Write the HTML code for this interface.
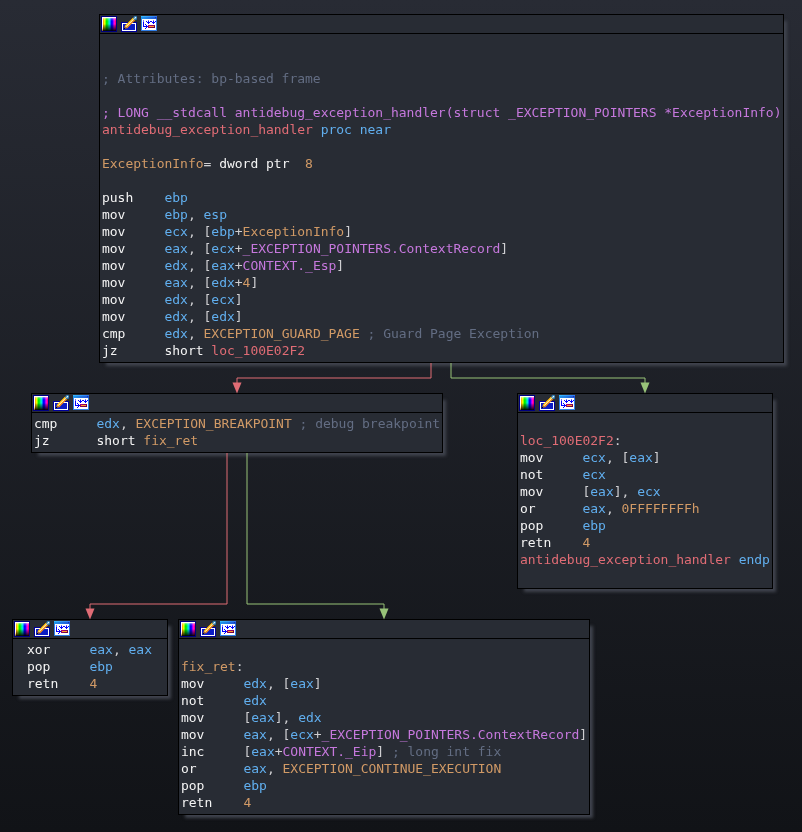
<!DOCTYPE html><html><head><meta charset="utf-8"><title>IDA graph</title><style>
html,body{margin:0;padding:0}
html{width:802px;height:832px;background:#111317}
body{width:802px;height:832px;overflow:hidden;background:linear-gradient(#282b34,#111317);position:relative;
 font-family:"DejaVu Sans Mono","Liberation Mono",monospace;font-size:13px}
.box{position:absolute;box-sizing:border-box;background:#282c34;border:1px solid #000;
 box-shadow:5px 5px 3px -2.3px #40444e}
.tb{position:absolute;left:0;right:0;top:18px;height:1px;background:#000}
.ic{position:absolute;left:1px;top:1px;height:16px}
.ic svg{position:absolute;top:0}
.code{position:absolute;color:#f4f4f4;will-change:transform;letter-spacing:-0.017px;margin-left:-0.1px}
.l{height:17px;line-height:17px;white-space:pre}
.m{color:#f4f4f4}.p{color:#cfcfd2}.r{color:#61afef}.c{color:#636d83}.f{color:#c678dd}.n{color:#e06c75}.o{color:#d19a66}
svg.e{position:absolute;left:0;top:0;z-index:5;will-change:transform}
</style></head><body><svg class="e" width="802" height="832" viewBox="0 0 802 832"><path d="M431 363 L431 378 L237 378 L237 384" fill="none" stroke="#e06c75" stroke-width="1"/><polygon points="232.5,382.5 241.5,382.5 237,393.5" fill="#e06c75"/><path d="M451 363 L451 378 L645 378 L645 384" fill="none" stroke="#98c379" stroke-width="1"/><polygon points="640.5,382.5 649.5,382.5 645,393.5" fill="#98c379"/><path d="M227 453 L227 604 L90 604 L90 610" fill="none" stroke="#e06c75" stroke-width="1"/><polygon points="85.5,608.5 94.5,608.5 90,619.5" fill="#e06c75"/><path d="M247 453 L247 604 L384 604 L384 610" fill="none" stroke="#98c379" stroke-width="1"/><polygon points="379.5,608.5 388.5,608.5 384,619.5" fill="#98c379"/></svg><div class="box" style="left:99px;top:14px;width:685px;height:349px"><div class="tb"></div><div class="ic"><svg width="16" height="16" viewBox="0 0 16 16" style="left:0"><defs><linearGradient id="g1h" x1="0" x2="1" y1="0" y2="0"><stop offset="0.036" stop-color="#fff"/><stop offset=".107" stop-color="#ffb000"/><stop offset=".18" stop-color="#f0ff00"/><stop offset=".25" stop-color="#80ff00"/><stop offset=".32" stop-color="#00f000"/><stop offset=".39" stop-color="#00f020"/><stop offset=".46" stop-color="#00f090"/><stop offset=".54" stop-color="#00e0e8"/><stop offset=".61" stop-color="#0070ff"/><stop offset=".68" stop-color="#0000ff"/><stop offset=".75" stop-color="#2000ff"/><stop offset=".82" stop-color="#a000ff"/><stop offset=".89" stop-color="#ff00e0"/><stop offset=".96" stop-color="#ff0080"/></linearGradient><linearGradient id="g1v" x1="0" x2="0" y1="0" y2="1"><stop offset="0.036" stop-color="#fff" stop-opacity="1"/><stop offset=".107" stop-color="#fff" stop-opacity=".45"/><stop offset=".18" stop-color="#fff" stop-opacity=".18"/><stop offset=".25" stop-color="#fff" stop-opacity=".06"/><stop offset=".32" stop-color="#fff" stop-opacity="0"/><stop offset=".5" stop-color="#000" stop-opacity="0"/><stop offset=".61" stop-color="#000" stop-opacity=".25"/><stop offset=".75" stop-color="#000" stop-opacity=".5"/><stop offset=".89" stop-color="#000" stop-opacity=".75"/><stop offset=".96" stop-color="#000" stop-opacity=".92"/></linearGradient><linearGradient id="g1w" x1="0" x2="0" y1="0" y2="1"><stop offset="0" stop-color="#fff"/><stop offset=".7" stop-color="#fff"/><stop offset=".85" stop-color="#ffd890"/><stop offset="1" stop-color="#705010"/></linearGradient></defs><rect x="0" y="0" width="16" height="16" fill="#00007f"/><rect x="1" y="1" width="14" height="14" fill="url(#g1h)"/><rect x="2" y="1" width="13" height="14" fill="url(#g1v)"/><rect x="1" y="1" width="1" height="14" fill="url(#g1w)"/></svg><svg width="16" height="16" viewBox="0 0 16 16" style="left:20px"><rect x="0" y="6" width="16" height="10" fill="#00009a"/><rect x="1" y="7" width="14" height="8" fill="#fff"/><rect x="2" y="8" width="12" height="6" fill="#0c1cc4"/><path d="M4.8 11.2L13.4 2.6" stroke="#f08a1c" stroke-width="3.4" fill="none"/><path d="M4.3 10.7L12.7 2.3" stroke="#ffc800" stroke-width="1.6" fill="none"/><path d="M5.1 10.7L13.1 2.7" stroke="#fff6d8" stroke-width="1" fill="none"/><path d="M2.9 13.1L3.5 10.4L5.6 12.4Z" fill="#d88838"/><path d="M2.7 13.3L3.3 11.6L4.6 12.8Z" fill="#000"/><circle cx="14.3" cy="1.9" r="2" fill="#2a7db4"/><path d="M13.5 2.7L15 1.2" stroke="#fff" stroke-width="1.1" fill="none"/></svg><svg width="16" height="16" viewBox="0 0 16 16" style="left:40px" shape-rendering="crispEdges"><defs><linearGradient id="g1t" x1="0" x2="1" y1="0" y2="0"><stop offset="0" stop-color="#38bcf8"/><stop offset="1" stop-color="#3074f0"/></linearGradient><linearGradient id="g1u" x1="0" x2="1" y1="0" y2="0"><stop offset="0" stop-color="#2098ec"/><stop offset="1" stop-color="#2050d4"/></linearGradient><linearGradient id="g1m" x1="0" x2="1" y1="0" y2="1"><stop offset="0" stop-color="#b00088"/><stop offset="1" stop-color="#600030"/></linearGradient></defs><rect x="0" y="0" width="16" height="15" fill="#2f7ee8"/><rect x="0" y="0" width="16" height="1" fill="url(#g1t)"/><rect x="0" y="1" width="16" height="2" fill="url(#g1u)"/><rect x="14" y="1" width="1" height="1" fill="#1838a8"/><rect x="1" y="3" width="14" height="11" fill="#fff"/><g fill="#0000ff"><rect x="2" y="4" width="1" height="7"/><rect x="2" y="10" width="5" height="1"/><rect x="4" y="8" width="1" height="1"/><rect x="5" y="9" width="1" height="1"/><rect x="5" y="11" width="1" height="1"/><rect x="4" y="12" width="1" height="1"/><rect x="5" y="5" width="1" height="1"/><rect x="7" y="4" width="1" height="4"/><rect x="6" y="6" width="3" height="1"/><rect x="9" y="5" width="2" height="1"/><rect x="12" y="4" width="1" height="4"/><rect x="11" y="6" width="3" height="1"/><rect x="14" y="5" width="1" height="1"/></g><g fill="#fff" fill-opacity=".45"><rect x="2" y="4" width="1" height="2"/><rect x="7" y="4" width="1" height="1"/><rect x="12" y="4" width="1" height="1"/></g><rect x="7" y="9" width="7" height="3" fill="url(#g1m)"/><rect x="8" y="10" width="5" height="1" fill="#ffa028"/></svg></div><div class="code" style="left:2px;top:21px"><div class="l"></div><div class="l"></div><div class="l"><span class="c">; Attributes: bp-based frame</span></div><div class="l"></div><div class="l"><span class="f">; LONG __stdcall antidebug_exception_handler(struct _EXCEPTION_POINTERS *ExceptionInfo)</span></div><div class="l"><span class="n">antidebug_exception_handler</span><span class="r"> proc near</span></div><div class="l"></div><div class="l"><span class="o">ExceptionInfo</span><span class="p">=</span><span class="m"> dword ptr  </span><span class="o">8</span></div><div class="l"></div><div class="l"><span class="m">push    </span><span class="r">ebp</span></div><div class="l"><span class="m">mov     </span><span class="r">ebp</span><span class="p">, </span><span class="r">esp</span></div><div class="l"><span class="m">mov     </span><span class="r">ecx</span><span class="p">, [</span><span class="r">ebp</span><span class="p">+</span><span class="o">ExceptionInfo</span><span class="p">]</span></div><div class="l"><span class="m">mov     </span><span class="r">eax</span><span class="p">, [</span><span class="r">ecx</span><span class="p">+</span><span class="f">_EXCEPTION_POINTERS.ContextRecord</span><span class="p">]</span></div><div class="l"><span class="m">mov     </span><span class="r">edx</span><span class="p">, [</span><span class="r">eax</span><span class="p">+</span><span class="f">CONTEXT._Esp</span><span class="p">]</span></div><div class="l"><span class="m">mov     </span><span class="r">eax</span><span class="p">, [</span><span class="r">edx</span><span class="p">+</span><span class="o">4</span><span class="p">]</span></div><div class="l"><span class="m">mov     </span><span class="r">edx</span><span class="p">, [</span><span class="r">ecx</span><span class="p">]</span></div><div class="l"><span class="m">mov     </span><span class="r">edx</span><span class="p">, [</span><span class="r">edx</span><span class="p">]</span></div><div class="l"><span class="m">cmp     </span><span class="r">edx</span><span class="p">, </span><span class="o">EXCEPTION_GUARD_PAGE</span><span class="c"> ; Guard Page Exception</span></div><div class="l"><span class="m">jz      </span><span class="m">short </span><span class="n">loc_100E02F2</span></div></div></div><div class="box" style="left:31px;top:393px;width:412px;height:60px"><div class="tb"></div><div class="ic"><svg width="16" height="16" viewBox="0 0 16 16" style="left:0"><defs><linearGradient id="g2h" x1="0" x2="1" y1="0" y2="0"><stop offset="0.036" stop-color="#fff"/><stop offset=".107" stop-color="#ffb000"/><stop offset=".18" stop-color="#f0ff00"/><stop offset=".25" stop-color="#80ff00"/><stop offset=".32" stop-color="#00f000"/><stop offset=".39" stop-color="#00f020"/><stop offset=".46" stop-color="#00f090"/><stop offset=".54" stop-color="#00e0e8"/><stop offset=".61" stop-color="#0070ff"/><stop offset=".68" stop-color="#0000ff"/><stop offset=".75" stop-color="#2000ff"/><stop offset=".82" stop-color="#a000ff"/><stop offset=".89" stop-color="#ff00e0"/><stop offset=".96" stop-color="#ff0080"/></linearGradient><linearGradient id="g2v" x1="0" x2="0" y1="0" y2="1"><stop offset="0.036" stop-color="#fff" stop-opacity="1"/><stop offset=".107" stop-color="#fff" stop-opacity=".45"/><stop offset=".18" stop-color="#fff" stop-opacity=".18"/><stop offset=".25" stop-color="#fff" stop-opacity=".06"/><stop offset=".32" stop-color="#fff" stop-opacity="0"/><stop offset=".5" stop-color="#000" stop-opacity="0"/><stop offset=".61" stop-color="#000" stop-opacity=".25"/><stop offset=".75" stop-color="#000" stop-opacity=".5"/><stop offset=".89" stop-color="#000" stop-opacity=".75"/><stop offset=".96" stop-color="#000" stop-opacity=".92"/></linearGradient><linearGradient id="g2w" x1="0" x2="0" y1="0" y2="1"><stop offset="0" stop-color="#fff"/><stop offset=".7" stop-color="#fff"/><stop offset=".85" stop-color="#ffd890"/><stop offset="1" stop-color="#705010"/></linearGradient></defs><rect x="0" y="0" width="16" height="16" fill="#00007f"/><rect x="1" y="1" width="14" height="14" fill="url(#g2h)"/><rect x="2" y="1" width="13" height="14" fill="url(#g2v)"/><rect x="1" y="1" width="1" height="14" fill="url(#g2w)"/></svg><svg width="16" height="16" viewBox="0 0 16 16" style="left:20px"><rect x="0" y="6" width="16" height="10" fill="#00009a"/><rect x="1" y="7" width="14" height="8" fill="#fff"/><rect x="2" y="8" width="12" height="6" fill="#0c1cc4"/><path d="M4.8 11.2L13.4 2.6" stroke="#f08a1c" stroke-width="3.4" fill="none"/><path d="M4.3 10.7L12.7 2.3" stroke="#ffc800" stroke-width="1.6" fill="none"/><path d="M5.1 10.7L13.1 2.7" stroke="#fff6d8" stroke-width="1" fill="none"/><path d="M2.9 13.1L3.5 10.4L5.6 12.4Z" fill="#d88838"/><path d="M2.7 13.3L3.3 11.6L4.6 12.8Z" fill="#000"/><circle cx="14.3" cy="1.9" r="2" fill="#2a7db4"/><path d="M13.5 2.7L15 1.2" stroke="#fff" stroke-width="1.1" fill="none"/></svg><svg width="16" height="16" viewBox="0 0 16 16" style="left:40px" shape-rendering="crispEdges"><defs><linearGradient id="g2t" x1="0" x2="1" y1="0" y2="0"><stop offset="0" stop-color="#38bcf8"/><stop offset="1" stop-color="#3074f0"/></linearGradient><linearGradient id="g2u" x1="0" x2="1" y1="0" y2="0"><stop offset="0" stop-color="#2098ec"/><stop offset="1" stop-color="#2050d4"/></linearGradient><linearGradient id="g2m" x1="0" x2="1" y1="0" y2="1"><stop offset="0" stop-color="#b00088"/><stop offset="1" stop-color="#600030"/></linearGradient></defs><rect x="0" y="0" width="16" height="15" fill="#2f7ee8"/><rect x="0" y="0" width="16" height="1" fill="url(#g2t)"/><rect x="0" y="1" width="16" height="2" fill="url(#g2u)"/><rect x="14" y="1" width="1" height="1" fill="#1838a8"/><rect x="1" y="3" width="14" height="11" fill="#fff"/><g fill="#0000ff"><rect x="2" y="4" width="1" height="7"/><rect x="2" y="10" width="5" height="1"/><rect x="4" y="8" width="1" height="1"/><rect x="5" y="9" width="1" height="1"/><rect x="5" y="11" width="1" height="1"/><rect x="4" y="12" width="1" height="1"/><rect x="5" y="5" width="1" height="1"/><rect x="7" y="4" width="1" height="4"/><rect x="6" y="6" width="3" height="1"/><rect x="9" y="5" width="2" height="1"/><rect x="12" y="4" width="1" height="4"/><rect x="11" y="6" width="3" height="1"/><rect x="14" y="5" width="1" height="1"/></g><g fill="#fff" fill-opacity=".45"><rect x="2" y="4" width="1" height="2"/><rect x="7" y="4" width="1" height="1"/><rect x="12" y="4" width="1" height="1"/></g><rect x="7" y="9" width="7" height="3" fill="url(#g2m)"/><rect x="8" y="10" width="5" height="1" fill="#ffa028"/></svg></div><div class="code" style="left:2px;top:21px"><div class="l"><span class="m">cmp     </span><span class="r">edx</span><span class="p">, </span><span class="o">EXCEPTION_BREAKPOINT</span><span class="c"> ; debug breakpoint</span></div><div class="l"><span class="m">jz      </span><span class="m">short </span><span class="o">fix_ret</span></div></div></div><div class="box" style="left:517px;top:393px;width:256px;height:196px"><div class="tb"></div><div class="ic"><svg width="16" height="16" viewBox="0 0 16 16" style="left:0"><defs><linearGradient id="g3h" x1="0" x2="1" y1="0" y2="0"><stop offset="0.036" stop-color="#fff"/><stop offset=".107" stop-color="#ffb000"/><stop offset=".18" stop-color="#f0ff00"/><stop offset=".25" stop-color="#80ff00"/><stop offset=".32" stop-color="#00f000"/><stop offset=".39" stop-color="#00f020"/><stop offset=".46" stop-color="#00f090"/><stop offset=".54" stop-color="#00e0e8"/><stop offset=".61" stop-color="#0070ff"/><stop offset=".68" stop-color="#0000ff"/><stop offset=".75" stop-color="#2000ff"/><stop offset=".82" stop-color="#a000ff"/><stop offset=".89" stop-color="#ff00e0"/><stop offset=".96" stop-color="#ff0080"/></linearGradient><linearGradient id="g3v" x1="0" x2="0" y1="0" y2="1"><stop offset="0.036" stop-color="#fff" stop-opacity="1"/><stop offset=".107" stop-color="#fff" stop-opacity=".45"/><stop offset=".18" stop-color="#fff" stop-opacity=".18"/><stop offset=".25" stop-color="#fff" stop-opacity=".06"/><stop offset=".32" stop-color="#fff" stop-opacity="0"/><stop offset=".5" stop-color="#000" stop-opacity="0"/><stop offset=".61" stop-color="#000" stop-opacity=".25"/><stop offset=".75" stop-color="#000" stop-opacity=".5"/><stop offset=".89" stop-color="#000" stop-opacity=".75"/><stop offset=".96" stop-color="#000" stop-opacity=".92"/></linearGradient><linearGradient id="g3w" x1="0" x2="0" y1="0" y2="1"><stop offset="0" stop-color="#fff"/><stop offset=".7" stop-color="#fff"/><stop offset=".85" stop-color="#ffd890"/><stop offset="1" stop-color="#705010"/></linearGradient></defs><rect x="0" y="0" width="16" height="16" fill="#00007f"/><rect x="1" y="1" width="14" height="14" fill="url(#g3h)"/><rect x="2" y="1" width="13" height="14" fill="url(#g3v)"/><rect x="1" y="1" width="1" height="14" fill="url(#g3w)"/></svg><svg width="16" height="16" viewBox="0 0 16 16" style="left:20px"><rect x="0" y="6" width="16" height="10" fill="#00009a"/><rect x="1" y="7" width="14" height="8" fill="#fff"/><rect x="2" y="8" width="12" height="6" fill="#0c1cc4"/><path d="M4.8 11.2L13.4 2.6" stroke="#f08a1c" stroke-width="3.4" fill="none"/><path d="M4.3 10.7L12.7 2.3" stroke="#ffc800" stroke-width="1.6" fill="none"/><path d="M5.1 10.7L13.1 2.7" stroke="#fff6d8" stroke-width="1" fill="none"/><path d="M2.9 13.1L3.5 10.4L5.6 12.4Z" fill="#d88838"/><path d="M2.7 13.3L3.3 11.6L4.6 12.8Z" fill="#000"/><circle cx="14.3" cy="1.9" r="2" fill="#2a7db4"/><path d="M13.5 2.7L15 1.2" stroke="#fff" stroke-width="1.1" fill="none"/></svg><svg width="16" height="16" viewBox="0 0 16 16" style="left:40px" shape-rendering="crispEdges"><defs><linearGradient id="g3t" x1="0" x2="1" y1="0" y2="0"><stop offset="0" stop-color="#38bcf8"/><stop offset="1" stop-color="#3074f0"/></linearGradient><linearGradient id="g3u" x1="0" x2="1" y1="0" y2="0"><stop offset="0" stop-color="#2098ec"/><stop offset="1" stop-color="#2050d4"/></linearGradient><linearGradient id="g3m" x1="0" x2="1" y1="0" y2="1"><stop offset="0" stop-color="#b00088"/><stop offset="1" stop-color="#600030"/></linearGradient></defs><rect x="0" y="0" width="16" height="15" fill="#2f7ee8"/><rect x="0" y="0" width="16" height="1" fill="url(#g3t)"/><rect x="0" y="1" width="16" height="2" fill="url(#g3u)"/><rect x="14" y="1" width="1" height="1" fill="#1838a8"/><rect x="1" y="3" width="14" height="11" fill="#fff"/><g fill="#0000ff"><rect x="2" y="4" width="1" height="7"/><rect x="2" y="10" width="5" height="1"/><rect x="4" y="8" width="1" height="1"/><rect x="5" y="9" width="1" height="1"/><rect x="5" y="11" width="1" height="1"/><rect x="4" y="12" width="1" height="1"/><rect x="5" y="5" width="1" height="1"/><rect x="7" y="4" width="1" height="4"/><rect x="6" y="6" width="3" height="1"/><rect x="9" y="5" width="2" height="1"/><rect x="12" y="4" width="1" height="4"/><rect x="11" y="6" width="3" height="1"/><rect x="14" y="5" width="1" height="1"/></g><g fill="#fff" fill-opacity=".45"><rect x="2" y="4" width="1" height="2"/><rect x="7" y="4" width="1" height="1"/><rect x="12" y="4" width="1" height="1"/></g><rect x="7" y="9" width="7" height="3" fill="url(#g3m)"/><rect x="8" y="10" width="5" height="1" fill="#ffa028"/></svg></div><div class="code" style="left:2px;top:21px"><div class="l"></div><div class="l"><span class="n">loc_100E02F2</span><span class="p">:</span></div><div class="l"><span class="m">mov     </span><span class="r">ecx</span><span class="p">, [</span><span class="r">eax</span><span class="p">]</span></div><div class="l"><span class="m">not     </span><span class="r">ecx</span></div><div class="l"><span class="m">mov     </span><span class="p">[</span><span class="r">eax</span><span class="p">], </span><span class="r">ecx</span></div><div class="l"><span class="m">or      </span><span class="r">eax</span><span class="p">, </span><span class="o">0FFFFFFFFh</span></div><div class="l"><span class="m">pop     </span><span class="r">ebp</span></div><div class="l"><span class="m">retn    </span><span class="o">4</span></div><div class="l"><span class="n">antidebug_exception_handler</span><span class="r"> endp</span></div><div class="l"></div></div></div><div class="box" style="left:12px;top:619px;width:156px;height:77px"><div class="tb"></div><div class="ic"><svg width="16" height="16" viewBox="0 0 16 16" style="left:0"><defs><linearGradient id="g4h" x1="0" x2="1" y1="0" y2="0"><stop offset="0.036" stop-color="#fff"/><stop offset=".107" stop-color="#ffb000"/><stop offset=".18" stop-color="#f0ff00"/><stop offset=".25" stop-color="#80ff00"/><stop offset=".32" stop-color="#00f000"/><stop offset=".39" stop-color="#00f020"/><stop offset=".46" stop-color="#00f090"/><stop offset=".54" stop-color="#00e0e8"/><stop offset=".61" stop-color="#0070ff"/><stop offset=".68" stop-color="#0000ff"/><stop offset=".75" stop-color="#2000ff"/><stop offset=".82" stop-color="#a000ff"/><stop offset=".89" stop-color="#ff00e0"/><stop offset=".96" stop-color="#ff0080"/></linearGradient><linearGradient id="g4v" x1="0" x2="0" y1="0" y2="1"><stop offset="0.036" stop-color="#fff" stop-opacity="1"/><stop offset=".107" stop-color="#fff" stop-opacity=".45"/><stop offset=".18" stop-color="#fff" stop-opacity=".18"/><stop offset=".25" stop-color="#fff" stop-opacity=".06"/><stop offset=".32" stop-color="#fff" stop-opacity="0"/><stop offset=".5" stop-color="#000" stop-opacity="0"/><stop offset=".61" stop-color="#000" stop-opacity=".25"/><stop offset=".75" stop-color="#000" stop-opacity=".5"/><stop offset=".89" stop-color="#000" stop-opacity=".75"/><stop offset=".96" stop-color="#000" stop-opacity=".92"/></linearGradient><linearGradient id="g4w" x1="0" x2="0" y1="0" y2="1"><stop offset="0" stop-color="#fff"/><stop offset=".7" stop-color="#fff"/><stop offset=".85" stop-color="#ffd890"/><stop offset="1" stop-color="#705010"/></linearGradient></defs><rect x="0" y="0" width="16" height="16" fill="#00007f"/><rect x="1" y="1" width="14" height="14" fill="url(#g4h)"/><rect x="2" y="1" width="13" height="14" fill="url(#g4v)"/><rect x="1" y="1" width="1" height="14" fill="url(#g4w)"/></svg><svg width="16" height="16" viewBox="0 0 16 16" style="left:20px"><rect x="0" y="6" width="16" height="10" fill="#00009a"/><rect x="1" y="7" width="14" height="8" fill="#fff"/><rect x="2" y="8" width="12" height="6" fill="#0c1cc4"/><path d="M4.8 11.2L13.4 2.6" stroke="#f08a1c" stroke-width="3.4" fill="none"/><path d="M4.3 10.7L12.7 2.3" stroke="#ffc800" stroke-width="1.6" fill="none"/><path d="M5.1 10.7L13.1 2.7" stroke="#fff6d8" stroke-width="1" fill="none"/><path d="M2.9 13.1L3.5 10.4L5.6 12.4Z" fill="#d88838"/><path d="M2.7 13.3L3.3 11.6L4.6 12.8Z" fill="#000"/><circle cx="14.3" cy="1.9" r="2" fill="#2a7db4"/><path d="M13.5 2.7L15 1.2" stroke="#fff" stroke-width="1.1" fill="none"/></svg><svg width="16" height="16" viewBox="0 0 16 16" style="left:40px" shape-rendering="crispEdges"><defs><linearGradient id="g4t" x1="0" x2="1" y1="0" y2="0"><stop offset="0" stop-color="#38bcf8"/><stop offset="1" stop-color="#3074f0"/></linearGradient><linearGradient id="g4u" x1="0" x2="1" y1="0" y2="0"><stop offset="0" stop-color="#2098ec"/><stop offset="1" stop-color="#2050d4"/></linearGradient><linearGradient id="g4m" x1="0" x2="1" y1="0" y2="1"><stop offset="0" stop-color="#b00088"/><stop offset="1" stop-color="#600030"/></linearGradient></defs><rect x="0" y="0" width="16" height="15" fill="#2f7ee8"/><rect x="0" y="0" width="16" height="1" fill="url(#g4t)"/><rect x="0" y="1" width="16" height="2" fill="url(#g4u)"/><rect x="14" y="1" width="1" height="1" fill="#1838a8"/><rect x="1" y="3" width="14" height="11" fill="#fff"/><g fill="#0000ff"><rect x="2" y="4" width="1" height="7"/><rect x="2" y="10" width="5" height="1"/><rect x="4" y="8" width="1" height="1"/><rect x="5" y="9" width="1" height="1"/><rect x="5" y="11" width="1" height="1"/><rect x="4" y="12" width="1" height="1"/><rect x="5" y="5" width="1" height="1"/><rect x="7" y="4" width="1" height="4"/><rect x="6" y="6" width="3" height="1"/><rect x="9" y="5" width="2" height="1"/><rect x="12" y="4" width="1" height="4"/><rect x="11" y="6" width="3" height="1"/><rect x="14" y="5" width="1" height="1"/></g><g fill="#fff" fill-opacity=".45"><rect x="2" y="4" width="1" height="2"/><rect x="7" y="4" width="1" height="1"/><rect x="12" y="4" width="1" height="1"/></g><rect x="7" y="9" width="7" height="3" fill="url(#g4m)"/><rect x="8" y="10" width="5" height="1" fill="#ffa028"/></svg></div><div class="code" style="left:14px;top:21px"><div class="l"><span class="m">xor     </span><span class="r">eax</span><span class="p">, </span><span class="r">eax</span></div><div class="l"><span class="m">pop     </span><span class="r">ebp</span></div><div class="l"><span class="m">retn    </span><span class="o">4</span></div></div></div><div class="box" style="left:178px;top:619px;width:412px;height:196px"><div class="tb"></div><div class="ic"><svg width="16" height="16" viewBox="0 0 16 16" style="left:0"><defs><linearGradient id="g5h" x1="0" x2="1" y1="0" y2="0"><stop offset="0.036" stop-color="#fff"/><stop offset=".107" stop-color="#ffb000"/><stop offset=".18" stop-color="#f0ff00"/><stop offset=".25" stop-color="#80ff00"/><stop offset=".32" stop-color="#00f000"/><stop offset=".39" stop-color="#00f020"/><stop offset=".46" stop-color="#00f090"/><stop offset=".54" stop-color="#00e0e8"/><stop offset=".61" stop-color="#0070ff"/><stop offset=".68" stop-color="#0000ff"/><stop offset=".75" stop-color="#2000ff"/><stop offset=".82" stop-color="#a000ff"/><stop offset=".89" stop-color="#ff00e0"/><stop offset=".96" stop-color="#ff0080"/></linearGradient><linearGradient id="g5v" x1="0" x2="0" y1="0" y2="1"><stop offset="0.036" stop-color="#fff" stop-opacity="1"/><stop offset=".107" stop-color="#fff" stop-opacity=".45"/><stop offset=".18" stop-color="#fff" stop-opacity=".18"/><stop offset=".25" stop-color="#fff" stop-opacity=".06"/><stop offset=".32" stop-color="#fff" stop-opacity="0"/><stop offset=".5" stop-color="#000" stop-opacity="0"/><stop offset=".61" stop-color="#000" stop-opacity=".25"/><stop offset=".75" stop-color="#000" stop-opacity=".5"/><stop offset=".89" stop-color="#000" stop-opacity=".75"/><stop offset=".96" stop-color="#000" stop-opacity=".92"/></linearGradient><linearGradient id="g5w" x1="0" x2="0" y1="0" y2="1"><stop offset="0" stop-color="#fff"/><stop offset=".7" stop-color="#fff"/><stop offset=".85" stop-color="#ffd890"/><stop offset="1" stop-color="#705010"/></linearGradient></defs><rect x="0" y="0" width="16" height="16" fill="#00007f"/><rect x="1" y="1" width="14" height="14" fill="url(#g5h)"/><rect x="2" y="1" width="13" height="14" fill="url(#g5v)"/><rect x="1" y="1" width="1" height="14" fill="url(#g5w)"/></svg><svg width="16" height="16" viewBox="0 0 16 16" style="left:20px"><rect x="0" y="6" width="16" height="10" fill="#00009a"/><rect x="1" y="7" width="14" height="8" fill="#fff"/><rect x="2" y="8" width="12" height="6" fill="#0c1cc4"/><path d="M4.8 11.2L13.4 2.6" stroke="#f08a1c" stroke-width="3.4" fill="none"/><path d="M4.3 10.7L12.7 2.3" stroke="#ffc800" stroke-width="1.6" fill="none"/><path d="M5.1 10.7L13.1 2.7" stroke="#fff6d8" stroke-width="1" fill="none"/><path d="M2.9 13.1L3.5 10.4L5.6 12.4Z" fill="#d88838"/><path d="M2.7 13.3L3.3 11.6L4.6 12.8Z" fill="#000"/><circle cx="14.3" cy="1.9" r="2" fill="#2a7db4"/><path d="M13.5 2.7L15 1.2" stroke="#fff" stroke-width="1.1" fill="none"/></svg><svg width="16" height="16" viewBox="0 0 16 16" style="left:40px" shape-rendering="crispEdges"><defs><linearGradient id="g5t" x1="0" x2="1" y1="0" y2="0"><stop offset="0" stop-color="#38bcf8"/><stop offset="1" stop-color="#3074f0"/></linearGradient><linearGradient id="g5u" x1="0" x2="1" y1="0" y2="0"><stop offset="0" stop-color="#2098ec"/><stop offset="1" stop-color="#2050d4"/></linearGradient><linearGradient id="g5m" x1="0" x2="1" y1="0" y2="1"><stop offset="0" stop-color="#b00088"/><stop offset="1" stop-color="#600030"/></linearGradient></defs><rect x="0" y="0" width="16" height="15" fill="#2f7ee8"/><rect x="0" y="0" width="16" height="1" fill="url(#g5t)"/><rect x="0" y="1" width="16" height="2" fill="url(#g5u)"/><rect x="14" y="1" width="1" height="1" fill="#1838a8"/><rect x="1" y="3" width="14" height="11" fill="#fff"/><g fill="#0000ff"><rect x="2" y="4" width="1" height="7"/><rect x="2" y="10" width="5" height="1"/><rect x="4" y="8" width="1" height="1"/><rect x="5" y="9" width="1" height="1"/><rect x="5" y="11" width="1" height="1"/><rect x="4" y="12" width="1" height="1"/><rect x="5" y="5" width="1" height="1"/><rect x="7" y="4" width="1" height="4"/><rect x="6" y="6" width="3" height="1"/><rect x="9" y="5" width="2" height="1"/><rect x="12" y="4" width="1" height="4"/><rect x="11" y="6" width="3" height="1"/><rect x="14" y="5" width="1" height="1"/></g><g fill="#fff" fill-opacity=".45"><rect x="2" y="4" width="1" height="2"/><rect x="7" y="4" width="1" height="1"/><rect x="12" y="4" width="1" height="1"/></g><rect x="7" y="9" width="7" height="3" fill="url(#g5m)"/><rect x="8" y="10" width="5" height="1" fill="#ffa028"/></svg></div><div class="code" style="left:2px;top:21px"><div class="l"></div><div class="l"><span class="o">fix_ret</span><span class="p">:</span></div><div class="l"><span class="m">mov     </span><span class="r">edx</span><span class="p">, [</span><span class="r">eax</span><span class="p">]</span></div><div class="l"><span class="m">not     </span><span class="r">edx</span></div><div class="l"><span class="m">mov     </span><span class="p">[</span><span class="r">eax</span><span class="p">], </span><span class="r">edx</span></div><div class="l"><span class="m">mov     </span><span class="r">eax</span><span class="p">, [</span><span class="r">ecx</span><span class="p">+</span><span class="f">_EXCEPTION_POINTERS.ContextRecord</span><span class="p">]</span></div><div class="l"><span class="m">inc     </span><span class="p">[</span><span class="r">eax</span><span class="p">+</span><span class="f">CONTEXT._Eip</span><span class="p">]</span><span class="c"> ; long int fix</span></div><div class="l"><span class="m">or      </span><span class="r">eax</span><span class="p">, </span><span class="o">EXCEPTION_CONTINUE_EXECUTION</span></div><div class="l"><span class="m">pop     </span><span class="r">ebp</span></div><div class="l"><span class="m">retn    </span><span class="o">4</span></div></div></div></body></html>
